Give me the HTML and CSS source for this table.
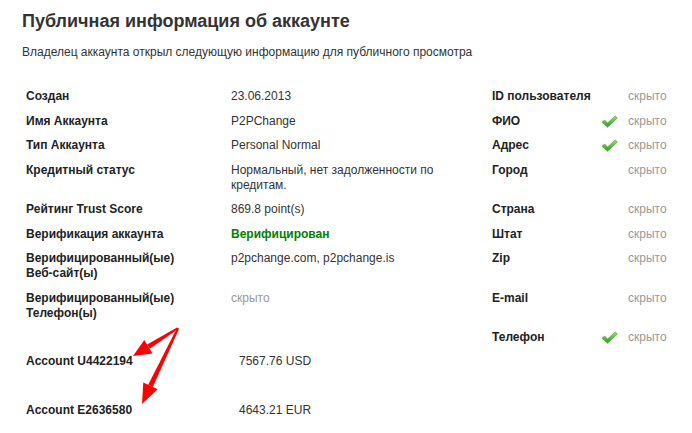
FILE: index.html
```html
<!doctype html>
<html>
  <head>
    <meta charset=utf-8>
    <title>Публичная информация об аккаунте</title>
    <link rel="stylesheet" href="styles.css">
  </head>
  <body>
    <div class=page>
      <h1>Публичная информация об аккаунте</h1>
      <p class=lead>Владелец аккаунта открыл следующую информацию для публичного просмотра</p>

      <table class=info>
        <colgroup>
          <col class=c-label><col class=c-value><col class=c-label2><col class=c-check><col>
        </colgroup>
        <tr>
          <th>Создан</th><td>23.06.2013</td>
          <th>ID пользователя</th><td></td><td class=hidden>скрыто</td>
        </tr>
        <tr>
          <th>Имя Аккаунта</th><td>P2PChange</td>
          <th>ФИО</th><td class=check><svg width=17 height=13 viewBox="0 0 17 13"><use href="#tick"/></svg></td><td class=hidden>скрыто</td>
        </tr>
        <tr>
          <th>Тип Аккаунта</th><td>Personal Normal</td>
          <th>Адрес</th><td class=check><svg width=17 height=13 viewBox="0 0 17 13"><use href="#tick"/></svg></td><td class=hidden>скрыто</td>
        </tr>
        <tr>
          <th>Кредитный статус</th><td>Нормальный, нет задолженности по<br>кредитам.</td>
          <th>Город</th><td></td><td class=hidden>скрыто</td>
        </tr>
        <tr>
          <th>Рейтинг Trust Score</th><td>869.8 point(s)</td>
          <th>Страна</th><td></td><td class=hidden>скрыто</td>
        </tr>
        <tr>
          <th>Верификация аккаунта</th><td class=verified>Верифицирован</td>
          <th>Штат</th><td></td><td class=hidden>скрыто</td>
        </tr>
        <tr>
          <th>Верифицированный(ые)<br>Веб-сайт(ы)</th><td>p2pchange.com, p2pchange.is</td>
          <th>Zip</th><td></td><td class=hidden>скрыто</td>
        </tr>
        <tr>
          <th>Верифицированный(ые)<br>Телефон(ы)</th><td class=hidden>скрыто</td>
          <th>E-mail</th><td></td><td class=hidden>скрыто</td>
        </tr>
        <tr>
          <th></th><td></td>
          <th>Телефон</th><td class=check><svg width=17 height=13 viewBox="0 0 17 13"><use href="#tick"/></svg></td><td class=hidden>скрыто</td>
        </tr>
      </table>

      <table class=accounts>
        <tr><th>Account U4422194</th><td>7567.76 USD</td></tr>
        <tr><th>Account E2636580</th><td>4643.21 EUR</td></tr>
      </table>

      <svg class=arrows width=692 height=433 viewBox="0 0 692 433">
        <g fill="#f00">
          <polygon points="179,328.5 177,327.5 147.1,344.6 149.7,348.8"/>
          <polygon points="133,356 152.5,353.6 144.3,339.9"/>
          <polygon points="179,329 177,328 148.2,384.8 152.8,387"/>
          <polygon points="142,404 157.7,389.3 143.3,382.5"/>
        </g>
      </svg>
    </div>

    <svg width=0 height=0 class=defs>
      <defs>
        <linearGradient id=tg x1=0 y1=0 x2=0 y2=1>
          <stop offset=0 stop-color="#9be27a"/>
          <stop offset=1 stop-color="#2f9a1e"/>
        </linearGradient>
        <symbol id=tick viewBox="0 0 17 13">
          <path d="M1 7.2 L3.6 5 L6.6 8 L14.2 1 L16.3 3 L6.6 12.2 Z" fill="url(#tg)" stroke="#3c8f2a" stroke-width=".6" stroke-linejoin=round/>
        </symbol>
      </defs>
    </svg>
  </body>
</html>
```

FILE: styles.css
```css
body {
  margin: 0;
  background: #fff;
  color: #333;
  font-family: 'Liberation Sans', Arial, sans-serif;
  font-size: 12px;
}

.page {
  position: relative;
  width: 692px;
  height: 433px;
  padding: 9px 22px 0;
  box-sizing: border-box;
  overflow: hidden;
}

h1 {
  margin: 0;
  font-size: 18px;
  line-height: 24px;
  font-weight: bold;
  color: #333;
}

.lead {
  margin: 12px 0 0;
  font-size: 12px;
  line-height: 15px;
}

table {
  border-collapse: collapse;
  margin-left: 4px;
}
th, td {
  padding: 5px 0 4.5px;
  line-height: 15px;
  text-align: left;
  vertical-align: top;
  white-space: nowrap;
}
th { font-weight: bold; color: #222 }

.info { margin-top: 24px; }
.c-label { width: 205px }
.c-value { width: 261px }
.c-label2 { width: 109px }
.c-check { width: 27px }

.hidden { color: #999 }
.verified { color: #008000; font-weight: bold }
.check svg { display: block; margin-top: 1px }

.accounts th { width: 213px }
.accounts th, .accounts td { padding: 4.5px 0 29px }

.arrows {
  position: absolute;
  left: 0;
  top: 0;
  pointer-events: none;
}
.defs { position: absolute }
```
